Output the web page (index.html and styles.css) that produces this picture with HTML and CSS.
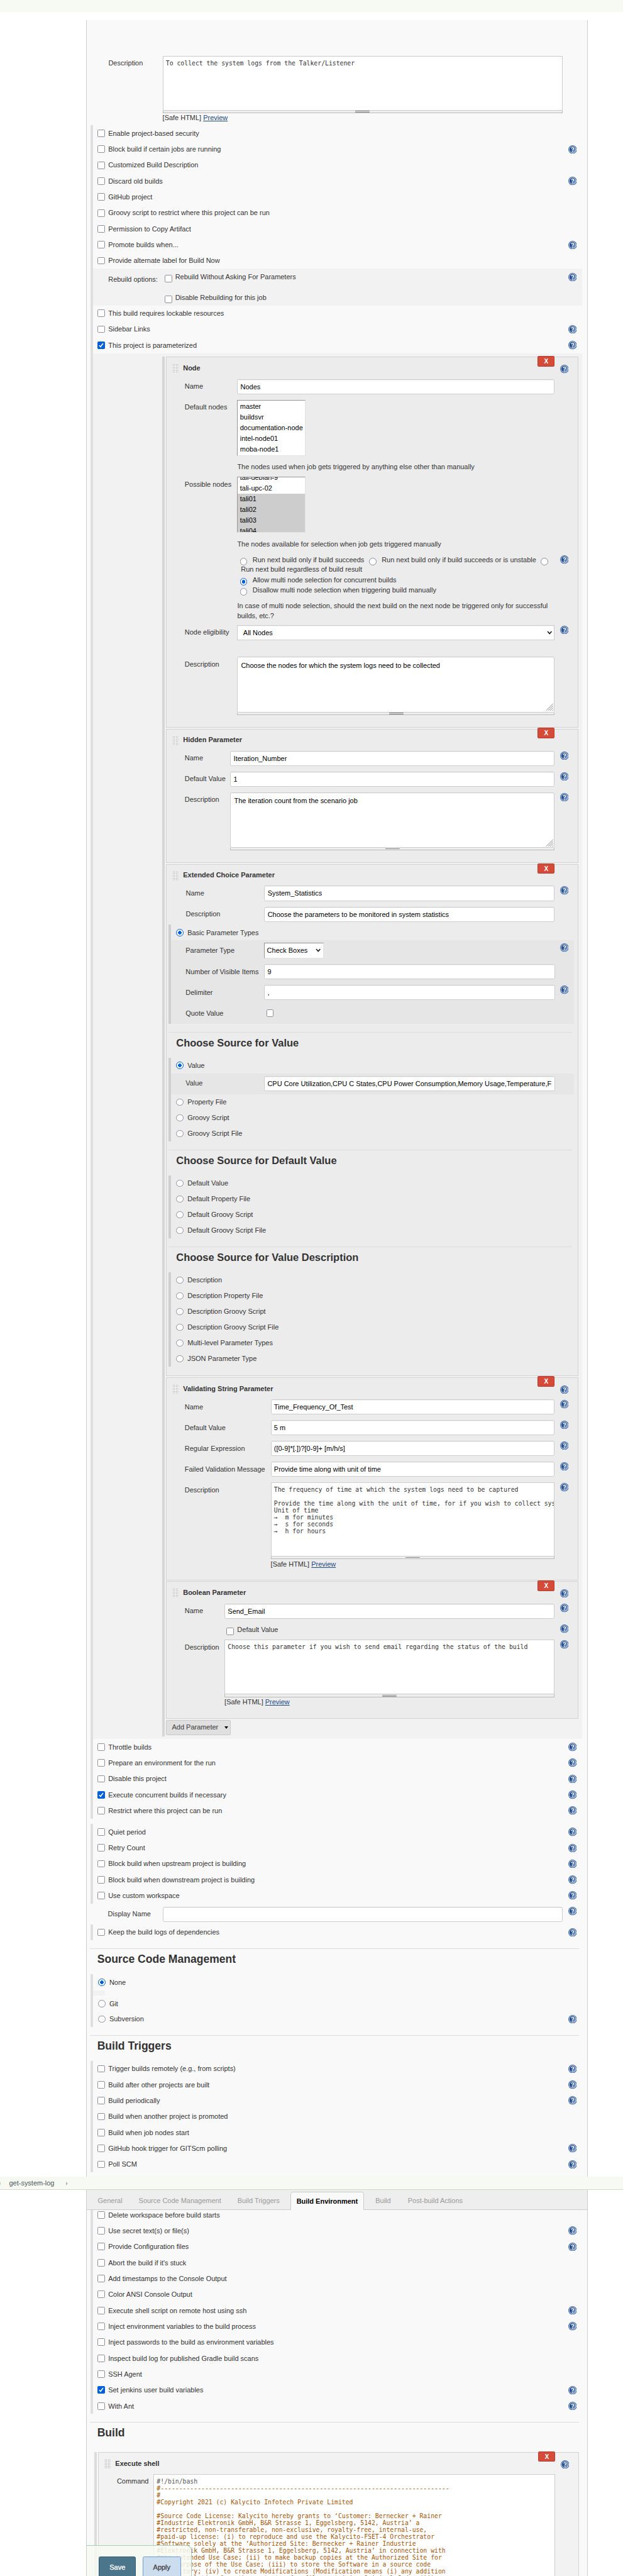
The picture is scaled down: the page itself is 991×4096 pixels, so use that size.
FILE: index.html
```html
<!DOCTYPE html>
<html lang="en">
<head>
<meta charset="utf-8">
<title>get-system-log Config</title>
<link rel="stylesheet" href="styles.css">
</head>
<body>
<svg class="defs" aria-hidden="true">
  <defs>
    <linearGradient id="blue" x1="0" x2="1" y1="0" y2="0.6"><stop offset="0.35" stop-color="#1f4a8e"/><stop offset="1" stop-color="#7c9dcc"/></linearGradient>
    <symbol id="help" viewBox="0 0 16 16">
      <circle cx="8" cy="8" r="8" fill="#2f5a98"/><circle cx="8" cy="8" r="6.9" fill="#f2f6fb"/><circle cx="8" cy="8" r="6" fill="url(#blue)"/>
      <path d="M5.9 6.3C5.9 3.6 10.2 3.7 10.1 6.2C10 7.7 8 7.7 8 9.3" fill="none" stroke="#fff" stroke-width="1.7"/><circle cx="8" cy="11.4" r="1.05" fill="#fff"/>
    </symbol>
    <symbol id="chev" viewBox="0 0 10 7"><path d="M1.2 1.2L5 5.4L8.8 1.2" fill="none" stroke="#111" stroke-width="1.7"/></symbol>
    <symbol id="size" viewBox="0 0 16 16"><path d="M1 15L15 1M5 15L15 5M9 15L15 9M13 15L15 13" fill="none" stroke="#777" stroke-width="1.1"/></symbol>
  </defs>
</svg>
<div class="page">
  <div class="topband"></div>
  <main class="panel general">
    <div class="field top-desc"><label>Description</label><div class="ctl"><div class="editor h103">To collect the system logs from the Talker/Listener</div><div class="grip"></div><div class="safe">[Safe HTML] <a>Preview</a></div></div></div>
    <div class="group">
      <div class="row"><i class="cb"></i>Enable project-based security</div>
      <div class="row"><i class="cb"></i>Block build if certain jobs are running<svg class="help"><use href="#help"/></svg></div>
      <div class="row"><i class="cb"></i>Customized Build Description</div>
      <div class="row"><i class="cb"></i>Discard old builds<svg class="help"><use href="#help"/></svg></div>
      <div class="row"><i class="cb"></i>GitHub project</div>
      <div class="row"><i class="cb"></i>Groovy script to restrict where this project can be run</div>
      <div class="row"><i class="cb"></i>Permission to Copy Artifact</div>
      <div class="row"><i class="cb"></i>Promote builds when...<svg class="help"><use href="#help"/></svg></div>
      <div class="row"><i class="cb"></i>Provide alternate label for Build Now</div>
      <div class="rebuild"><span class="rb-label">Rebuild options:</span>
        <div class="rb-opts"><div><i class="cb low"></i>Rebuild Without Asking For Parameters</div><div><i class="cb low"></i>Disable Rebuilding for this job</div></div>
        <svg class="help"><use href="#help"/></svg></div>
      <div class="row"><i class="cb"></i>This build requires lockable resources</div>
      <div class="row"><i class="cb"></i>Sidebar Links<svg class="help"><use href="#help"/></svg></div>
      <div class="row"><i class="cb on"><svg viewBox="0 0 14 14"><path d="M3.4 7.4L5.9 10L10.6 3.6"/></svg></i>This project is parameterized<svg class="help"><use href="#help"/></svg></div>
      <div class="params"><div class="plist">

        <section class="box b-node">
          <span class="del">X</span>
          <header><i class="drag"></i>Node<svg class="help"><use href="#help"/></svg></header>
          <div class="field"><label>Name</label><div class="ctl input">Nodes</div></div>
          <div class="field f-def"><label>Default nodes</label><div class="ctl">
            <div class="list"><span>master</span><span>buildsvr</span><span>documentation-node</span><span>intel-node01</span><span>moba-node1</span></div>
            <p class="note">The nodes used when job gets triggered by anything else other than manually</p></div></div>
          <div class="field f-pos"><label>Possible nodes</label><div class="ctl">
            <div class="list scrolled"><span>tali-debian-9</span><span>tali-upc-02</span><span class="sel">tali01</span><span class="sel">tali02</span><span class="sel">tali03</span><span class="sel">tali04</span></div>
            <p class="note">The nodes available for selection when job gets triggered manually</p></div></div>
          <div class="field f-rad"><label></label><div class="ctl">
            <div class="rl l1"><i class="rd"></i><span>Run next build only if build succeeds</span><i class="rd"></i><span>Run next build only if build succeeds or is unstable</span><i class="rd"></i></div>
            <div class="rl l2">Run next build regardless of build result</div>
            <div class="rl l3"><i class="rd on"></i><span>Allow multi node selection for concurrent builds</span></div>
            <div class="rl l4"><i class="rd"></i><span>Disallow multi node selection when triggering build manually</span></div>
            <p class="multi">In case of multi node selection, should the next build on the next node be triggered only for successful<br>builds, etc.?</p></div><svg class="help"><use href="#help"/></svg></div>
          <div class="field f-el"><label>Node eligibility</label><div class="ctl input select">All Nodes<svg class="chev"><use href="#chev"/></svg></div><svg class="help"><use href="#help"/></svg></div>
          <div class="field"><label>Description</label><div class="ctl"><div class="area">Choose the nodes for which the system logs need to be collected<svg class="size"><use href="#size"/></svg></div><div class="grip"></div></div></div>
        </section>

        <section class="box b-hidden">
          <span class="del">X</span>
          <header><i class="drag"></i>Hidden Parameter</header>
          <div class="field"><label>Name</label><div class="ctl input">Iteration_Number</div><svg class="help"><use href="#help"/></svg></div>
          <div class="field"><label>Default Value</label><div class="ctl input">1</div><svg class="help"><use href="#help"/></svg></div>
          <div class="field"><label>Description</label><div class="ctl"><div class="area">The iteration count from the scenario job<svg class="size"><use href="#size"/></svg></div><div class="grip"></div></div><svg class="help"><use href="#help"/></svg></div>
        </section>

        <section class="box b-ext">
          <span class="del">X</span>
          <header><i class="drag"></i>Extended Choice Parameter</header>
          <div class="field f40"><label>Name</label><div class="ctl input tall">System_Statistics</div><svg class="help"><use href="#help"/></svg></div>
          <div class="field f33"><label>Description</label><div class="ctl input">Choose the parameters to be monitored in system statistics</div></div>
          <div class="sub">
            <div class="srow r29"><i class="rd on"></i>Basic Parameter Types</div>
            <div class="shade big">
              <div class="field f41"><label>Parameter Type</label><div class="ctl"><div class="inset">Check Boxes<svg class="chev"><use href="#chev"/></svg></div></div><svg class="help"><use href="#help"/></svg></div>
              <div class="field"><label>Number of Visible Items</label><div class="ctl input">9</div></div>
              <div class="field"><label>Delimiter</label><div class="ctl input">,</div><svg class="help"><use href="#help"/></svg></div>
              <div class="field"><label>Quote Value</label><div class="ctl"><i class="cb quote"></i></div></div>
            </div>
          </div>
          <h3>Choose Source for Value</h3>
          <div class="sub">
            <div class="srow"><i class="rd on"></i>Value</div>
            <div class="shade"><div class="field"><label>Value</label><div class="ctl input tall">CPU Core Utilization,CPU C States,CPU Power Consumption,Memory Usage,Temperature,F</div></div></div>
            <div class="srow"><i class="rd"></i>Property File</div>
            <div class="srow"><i class="rd"></i>Groovy Script</div>
            <div class="srow"><i class="rd"></i>Groovy Script File</div>
          </div>
          <h3>Choose Source for Default Value</h3>
          <div class="sub">
            <div class="srow"><i class="rd"></i>Default Value</div>
            <div class="srow"><i class="rd"></i>Default Property File</div>
            <div class="srow"><i class="rd"></i>Default Groovy Script</div>
            <div class="srow"><i class="rd"></i>Default Groovy Script File</div>
          </div>
          <h3>Choose Source for Value Description</h3>
          <div class="sub">
            <div class="srow"><i class="rd"></i>Description</div>
            <div class="srow"><i class="rd"></i>Description Property File</div>
            <div class="srow"><i class="rd"></i>Description Groovy Script</div>
            <div class="srow"><i class="rd"></i>Description Groovy Script File</div>
            <div class="srow"><i class="rd"></i>Multi-level Parameter Types</div>
            <div class="srow"><i class="rd"></i>JSON Parameter Type</div>
          </div>
        </section>

        <section class="box b-val">
          <span class="del">X</span>
          <header><i class="drag"></i>Validating String Parameter<svg class="help"><use href="#help"/></svg></header>
          <div class="field"><label>Name</label><div class="ctl input">Time_Frequency_Of_Test</div><svg class="help"><use href="#help"/></svg></div>
          <div class="field"><label>Default Value</label><div class="ctl input">5 m</div><svg class="help"><use href="#help"/></svg></div>
          <div class="field"><label>Regular Expression</label><div class="ctl input">([0-9]*[.])?[0-9]+ [m/h/s]</div><svg class="help"><use href="#help"/></svg></div>
          <div class="field f40"><label>Failed Validation Message</label><div class="ctl input tall">Provide time along with unit of time</div><svg class="help"><use href="#help"/></svg></div>
          <div class="field"><label>Description</label><div class="ctl"><div class="editor h139">The frequency of time at which the system logs need to be captured

Provide the time along with the unit of time, for if you wish to collect sys
Unit of time
→  m for minutes
→  s for seconds
→  h for hours</div><div class="grip"></div><div class="safe">[Safe HTML] <a>Preview</a></div></div><svg class="help"><use href="#help"/></svg></div>
        </section>

        <section class="box b-bool">
          <span class="del">X</span>
          <header><i class="drag"></i>Boolean Parameter<svg class="help"><use href="#help"/></svg></header>
          <div class="field"><label>Name</label><div class="ctl input">Send_Email</div><svg class="help"><use href="#help"/></svg></div>
          <div class="field f-chk"><label></label><div class="ctl"><i class="cb"></i>Default Value</div><svg class="help"><use href="#help"/></svg></div>
          <div class="field"><label>Description</label><div class="ctl"><div class="editor h103">Choose this parameter if you wish to send email regarding the status of the build</div><div class="grip"></div><div class="safe">[Safe HTML] <a>Preview</a></div></div><svg class="help"><use href="#help"/></svg></div>
        </section>
        <div class="addp">Add Parameter<i></i></div>
      </div></div>
      <div class="row"><i class="cb"></i>Throttle builds<svg class="help"><use href="#help"/></svg></div>
      <div class="row"><i class="cb"></i>Prepare an environment for the run<svg class="help"><use href="#help"/></svg></div>
      <div class="row"><i class="cb"></i>Disable this project<svg class="help"><use href="#help"/></svg></div>
      <div class="row"><i class="cb on"><svg viewBox="0 0 14 14"><path d="M3.4 7.4L5.9 10L10.6 3.6"/></svg></i>Execute concurrent builds if necessary<svg class="help"><use href="#help"/></svg></div>
      <div class="row"><i class="cb"></i>Restrict where this project can be run<svg class="help"><use href="#help"/></svg></div>
    </div>
    <div class="group gap">
      <div class="row"><i class="cb"></i>Quiet period<svg class="help"><use href="#help"/></svg></div>
      <div class="row"><i class="cb"></i>Retry Count<svg class="help"><use href="#help"/></svg></div>
      <div class="row"><i class="cb"></i>Block build when upstream project is building<svg class="help"><use href="#help"/></svg></div>
      <div class="row"><i class="cb"></i>Block build when downstream project is building<svg class="help"><use href="#help"/></svg></div>
      <div class="row"><i class="cb"></i>Use custom workspace<svg class="help"><use href="#help"/></svg></div>
    </div>
    <div class="field display-name"><label>Display Name</label><div class="ctl input"></div><svg class="help"><use href="#help"/></svg></div>
    <div class="group">
      <div class="row"><i class="cb"></i>Keep the build logs of dependencies<svg class="help"><use href="#help"/></svg></div>
    </div>
    <h2>Source Code Management</h2>
    <div class="group scm">
      <div class="row"><i class="rd on"></i>None</div>
      <div class="stub"></div>
      <div class="row"><i class="rd"></i>Git</div>
      <div class="row r29"><i class="rd"></i>Subversion<svg class="help"><use href="#help"/></svg></div>
    </div>
    <h2>Build Triggers</h2>
    <div class="group">
      <div class="row"><i class="cb"></i>Trigger builds remotely (e.g., from scripts)<svg class="help"><use href="#help"/></svg></div>
      <div class="row"><i class="cb"></i>Build after other projects are built<svg class="help"><use href="#help"/></svg></div>
      <div class="row"><i class="cb"></i>Build periodically<svg class="help"><use href="#help"/></svg></div>
      <div class="row"><i class="cb"></i>Build when another project is promoted</div>
      <div class="row"><i class="cb"></i>Build when job nodes start</div>
      <div class="row"><i class="cb"></i>GitHub hook trigger for GITScm polling<svg class="help"><use href="#help"/></svg></div>
      <div class="row"><i class="cb"></i>Poll SCM<svg class="help"><use href="#help"/></svg></div>
    </div>
  </main>
  <nav class="crumbs"><i class="arr first"></i><span>get-system-log</span><i class="arr"></i></nav>
  <main class="panel env">
    <div class="tabs"><span class="t1">General</span><span class="t2">Source Code Management</span><span class="t3">Build Triggers</span><span class="active">Build Environment</span><span class="t5">Build</span><span class="t6">Post-build Actions</span></div>
    <div class="group">
      <div class="row cut"><i class="cb"></i>Delete workspace before build starts</div>
      <div class="row"><i class="cb"></i>Use secret text(s) or file(s)<svg class="help"><use href="#help"/></svg></div>
      <div class="row"><i class="cb"></i>Provide Configuration files<svg class="help"><use href="#help"/></svg></div>
      <div class="row"><i class="cb"></i>Abort the build if it's stuck</div>
      <div class="row"><i class="cb"></i>Add timestamps to the Console Output</div>
      <div class="row"><i class="cb"></i>Color ANSI Console Output</div>
      <div class="row"><i class="cb"></i>Execute shell script on remote host using ssh<svg class="help"><use href="#help"/></svg></div>
      <div class="row"><i class="cb"></i>Inject environment variables to the build process<svg class="help"><use href="#help"/></svg></div>
      <div class="row"><i class="cb"></i>Inject passwords to the build as environment variables</div>
      <div class="row"><i class="cb"></i>Inspect build log for published Gradle build scans</div>
      <div class="row"><i class="cb"></i>SSH Agent</div>
      <div class="row"><i class="cb on"><svg viewBox="0 0 14 14"><path d="M3.4 7.4L5.9 10L10.6 3.6"/></svg></i>Set jenkins user build variables<svg class="help"><use href="#help"/></svg></div>
      <div class="row"><i class="cb"></i>With Ant<svg class="help"><use href="#help"/></svg></div>
    </div>
    <h2 class="h-build">Build</h2>
    <div class="steps">
      <section class="box b-shell">
        <span class="del">X</span>
        <header><i class="drag"></i>Execute shell<svg class="help"><use href="#help"/></svg></header>
        <div class="field"><label>Command</label><div class="ctl"><div class="editor code"><span class="first-line">#!/bin/bash</span>
#------------------------------------------------------------------------------
#
#Copyright 2021 (c) Kalycito Infotech Private Limited

#Source Code License: Kalycito hereby grants to ‘Customer: Bernecker + Rainer
#Industrie Elektronik GmbH, B&amp;R Strasse 1, Eggelsberg, 5142, Austria’ a
#restricted, non-transferable, non-exclusive, royalty-free, internal-use,
#paid-up license: (i) to reproduce and use the Kalycito-FSET-4 Orchestrator
#Software solely at the ‘Authorized Site: Bernecker + Rainer Industrie
#Elektronik GmbH, B&amp;R Strasse 1, Eggelsberg, 5142, Austria’ in connection with
#the intended Use Case; (ii) to make backup copies at the Authorized Site for
#the purpose of the Use Case; (iii) to store the Software in a source code
#repository; (iv) to create Modifications (Modification means (i) any addition
#to, or deletion from the contents of a file containing Original Code; (ii) any</div></div></div>
      </section>
    </div>
    <div class="footer"><span class="save">Save</span><span class="apply">Apply</span></div>
  </main>
</div>
</body>
</html>
```
FILE: styles.css
```css
* { box-sizing: border-box; }
html, body { margin: 0; padding: 0; background: #fff; }
body { width: 991px; height: 4096px; overflow: hidden; }
.defs { position: absolute; width: 0; height: 0; }
.page { zoom: 0.84465; width: 1174px; height: 4850px; overflow: hidden; font: 13px/16px "Liberation Sans", Arial, sans-serif; color: #333; background: #fff; }
.topband { height: 23px; background: #f6faf2; margin-bottom: 15px; }
.panel { width: 945px; margin-left: 162px; background: #f9f9f9; border: solid #ccc; border-width: 0 1px; }
.general { height: 4059px; padding-top: 67px; overflow: hidden; }

.group { margin-left: 7px; width: 926px; border-left: 5px solid #dfdfdf; }
.gap { margin-top: 10px; }
.row { height: 30px; padding: 1.5px 10px 0 9px; display: flex; align-items: center; white-space: nowrap; }
.r29 { height: 29px; }
.help { width: 16px; height: 16px; flex: none; display: block; }
.row .help { margin: -1.5px 0 0 auto; }
.row .cb, .row .rd { margin-top: -1.5px; }
.cb { width: 14px; height: 14px; flex: none; border: 2px solid #8f8f9d; border-radius: 2px; background: #fff; margin-right: 6px; display: block; }
.cb.on { background: #0060df; border: 0; }
.cb svg { width: 14px; height: 14px; display: block; }
.cb path { fill: none; stroke: #fff; stroke-width: 2; }
.rd { width: 14px; height: 14px; flex: none; border: 2px solid #8f8f9d; border-radius: 50%; background: #fff; display: block; }
.rd.on { border-color: #0060df; background: radial-gradient(circle, #0060df 0 3px, #fff 3.6px); }

.rebuild { height: 69px; background: #f2f2f2; padding: 7.5px 10px 0 29px; display: flex; }
.rb-label { width: 106px; padding-top: 5px; }
.rb-opts div { display: flex; height: 39px; align-items: flex-start; }
.rb-opts .cb { margin-top: 4.5px; }
.rebuild .help { margin-left: auto; }

.field { display: flex; align-items: flex-start; height: 39px; white-space: nowrap; padding: 0 43px 0 34px; }
.field label { flex: none; width: var(--lw); padding-top: 6.6px; }
.ctl { flex: 1; min-width: 0; }
.field > .help { margin: 1px -26px 0 10px; }
.input { height: 28.5px; border: 1px solid #ccc; border-radius: 3px; background: #fff; box-shadow: inset 0 1px 1px rgba(0,0,0,.075); padding: 0 5px; line-height: 27px; color: #000; overflow: hidden; }
.input.tall { height: 29px; }
.editor { border: 1px solid #ccc; background: #fff; padding: 6px 0 0 5px; font: 11.6px/13px "DejaVu Sans Mono", monospace; white-space: pre; overflow: hidden; color: #333; }
.h103 { height: 103px; }
.h139 { height: 139.5px; }
.area { position: relative; height: 104.5px; border: 1px solid #ccc; border-radius: 3px; background: #fff; padding: 7.5px 6px; color: #000; box-shadow: inset 0 1px 1px rgba(0,0,0,.075); }
.size { position: absolute; right: 1px; bottom: 1px; width: 15px; height: 15px; }
.grip { height: 5px; border: 1px solid #bbb; border-top: 0; background: linear-gradient(#888 0 1px, transparent 1px 2px, #888 2px 3px, transparent 3px) 50% 1px / 27px 4px no-repeat #eee; }
.safe { padding-top: 1.5px; }
.safe a { color: #204a87; text-decoration: underline; }
.top-desc { height: 131px; padding: 0 46px 0 41px; --lw: 102px; }

.params { height: 2609px; background: #f2f2f2; padding: 7px 0 0 131px; }
.plist { width: 783px; height: 2597px; border-left: 5px solid #d6d6d6; padding-left: 2px; }
.box { position: relative; border: 1px solid #d3d3d3; background: #ececec; margin-bottom: 2px; }
.box header { height: 40.5px; display: flex; align-items: center; padding: 1px 43px 0 11px; font-weight: 700; }
.box header .help { margin: 2px -26px 0 auto; }
.drag { width: 12px; height: 18px; margin-right: 8px; background: radial-gradient(circle at 1.5px 1.5px, #aaa 0 .8px, #fff 1.2px) 0 0 / 3px 3px; }
.del { position: absolute; right: 43px; top: -3px; width: 32px; height: 20px; background: #d54a38; border: 1px solid #b53b2b; border-radius: 2px; color: #fff; font-weight: 700; font-size: 12px; line-height: 18px; text-align: center; }
.b-node { height: 698px; --lw: 99px; }
.b-hidden { height: 253px; --lw: 86px; }
.b-ext { height: 964px; --lw: 148px; }
.b-val { height: 382px; --lw: 162px; }
.b-bool { height: 259px; --lw: 75px; }
.f-def { height: 145px; }
.f-pos { height: 147px; }
.f-rad { height: 132px; }
.f-el { height: 60px; }
.list { width: 129px; height: 105.5px; border: 2px solid #e3e3e3; border-top-color: #979797; border-left-color: #979797; background: #fff; overflow: hidden; padding-top: 2px; color: #000; }
.list span { display: block; height: 20px; line-height: 20px; padding-left: 4px; }
.list .sel { background: #cdcdcd; }
.scrolled { padding: 0; }
.scrolled span:first-child { margin-top: -9px; }
.note { margin: 13.5px 0 0; }
.rl { display: flex; align-items: center; padding-left: 5px; }
.rl .rd { margin: 6px 10px 0 0; }
.rl span + .rd { margin-left: 9px; }
.l1 { height: 18px; margin-top: 1px; }
.l1 .rd:last-child { margin-right: 0; }
.l2 { height: 17px; padding-left: 7px; }
.l3 { height: 19px; margin-top: 2px; }
.l4 { height: 20px; }
.multi { margin: 9px 0 0; line-height: 19px; }
.select { display: flex; justify-content: space-between; padding: 0 4px 0 10px; border-radius: 0; line-height: 28px; height: 29px; }
.chev { width: 10px; height: 7px; align-self: center; }

.b-ext header { height: 39.5px; }
.b-ext .field { padding-left: 36px; }
.b-ext .f40, .b-val .f40 { height: 39.5px; }
.b-ext .f33 { height: 34px; }
.sub { margin-left: 3px; width: 764px; border-left: 5px solid #cfcfcf; }
.srow { height: 29.6px; display: flex; align-items: center; padding: 1.5px 0 0 10px; }
.srow .rd { margin: -1.5px 7.5px 0 0; }
.srow.r29 { height: 29px; }
.shade { background: #e6e6e6; height: 39.5px; padding-top: 5px; }
.shade.big { height: 157px; }
.b-ext .shade .field { padding: 0 36px 0 28px; }
.b-ext .f41 { height: 40.5px; }
.inset { width: 112px; height: 29px; border: 2px solid #e3e3e3; border-top-color: #979797; border-left-color: #979797; background: #fff; color: #000; padding: 0 4px; display: flex; justify-content: space-between; line-height: 27px; }
.cb.quote { margin: 7px 0 0 4px; }
h3 { margin: 15.5px 12px 0 3px; border-top: 1px solid #dcdcdc; height: 48.5px; padding: 7px 0 0 15px; font-size: 19.5px; line-height: 24px; }
.f-chk { height: 29.5px; }
.f-chk .ctl { display: flex; padding: 2.5px 0 0 4px; }
.f-chk .cb { margin-top: 4.5px; }
.addp { width: 122px; height: 29px; border: 1px solid #c9c9c9; border-radius: 2px; background: #e0e0e0; display: flex; align-items: center; padding-left: 10px; color: #4d4d4d; -webkit-text-stroke: .2px #4d4d4d; }
.addp i { border: 4px solid transparent; border-top: 5px solid #000; border-bottom: 0; margin-left: 11px; }

.display-name { padding: 5.5px 46px 0 40px; --lw: 103px; }
h2 { margin: 15.5px 15px 0 6px; border-top: 1px solid #dcdcdc; height: 48.5px; padding: 7px 0 0 14px; font-size: 20.8px; line-height: 24px; }
.scm .row { padding-left: 10px; }
.scm .rd { margin-right: 7px; }
.stub { width: 23px; height: 10px; background: #f2f2f2; }

.crumbs { height: 26px; background: #f6faf2; border-bottom: 1px solid #d3d7cf; display: flex; align-items: center; color: #4d545d; padding-top: 2px; }
.crumbs span { margin: 0 22px 0 16px; }
.arr { border: 4px solid transparent; border-left: 4px solid #b5b8b0; border-right: 0; }
.arr.first { border-left-width: 2px; }
.env { position: relative; height: 727px; overflow: hidden; }
.tabs { height: 37px; background: #eee; border-bottom: 1px solid #ccc; display: flex; padding: 3px 0 0 21px; color: #999; line-height: 35px; white-space: nowrap; font-size: 13px; }
.tabs span { flex: none; }
.t1 { width: 77px; }
.t2 { width: 186px; }
.t3 { width: 100px; }
.tabs .active { width: 138px; height: 34px; background: #f9f9f9; border: 1px solid #ccc; border-bottom: 0; border-radius: 5px 5px 0 0; text-align: center; color: #000; font-weight: 700; line-height: 34px; }
.t5 { width: 61px; margin-left: 22px; }
.cut { height: 24.5px; padding-bottom: 5.5px; }
.h-build { height: 56.5px; }
.steps { margin-left: 15px; width: 912px; border-left: 5px solid #dcdcdc; padding-left: 2px; }
.b-shell { height: 240px; border-bottom: 0; background: #f2f2f2; --lw: 69px; }
.b-shell header { height: 40px; }
.editor.code { height: 210px; color: #a50; }
.first-line { color: #555; }
.footer { position: absolute; left: 0; bottom: 0; width: 198px; height: 59px; border: solid #a9d0b6; border-width: 1px 1px 0 0; border-radius: 0 10px 0 0; background: rgba(246,250,242,.85); display: flex; gap: 12px; padding: 20px 0 0 23px; }
.footer span { height: 40px; border: 1px solid #2f5d75; border-radius: 3px 3px 0 0; background: #4b758b; color: #fff; text-align: center; line-height: 38px; -webkit-text-stroke: .4px; font-size: 13px; }
.footer .save { width: 70px; }
.footer .apply { width: 73px; background: #cbddef; border-color: #6d9bd3; color: #444; }
```
